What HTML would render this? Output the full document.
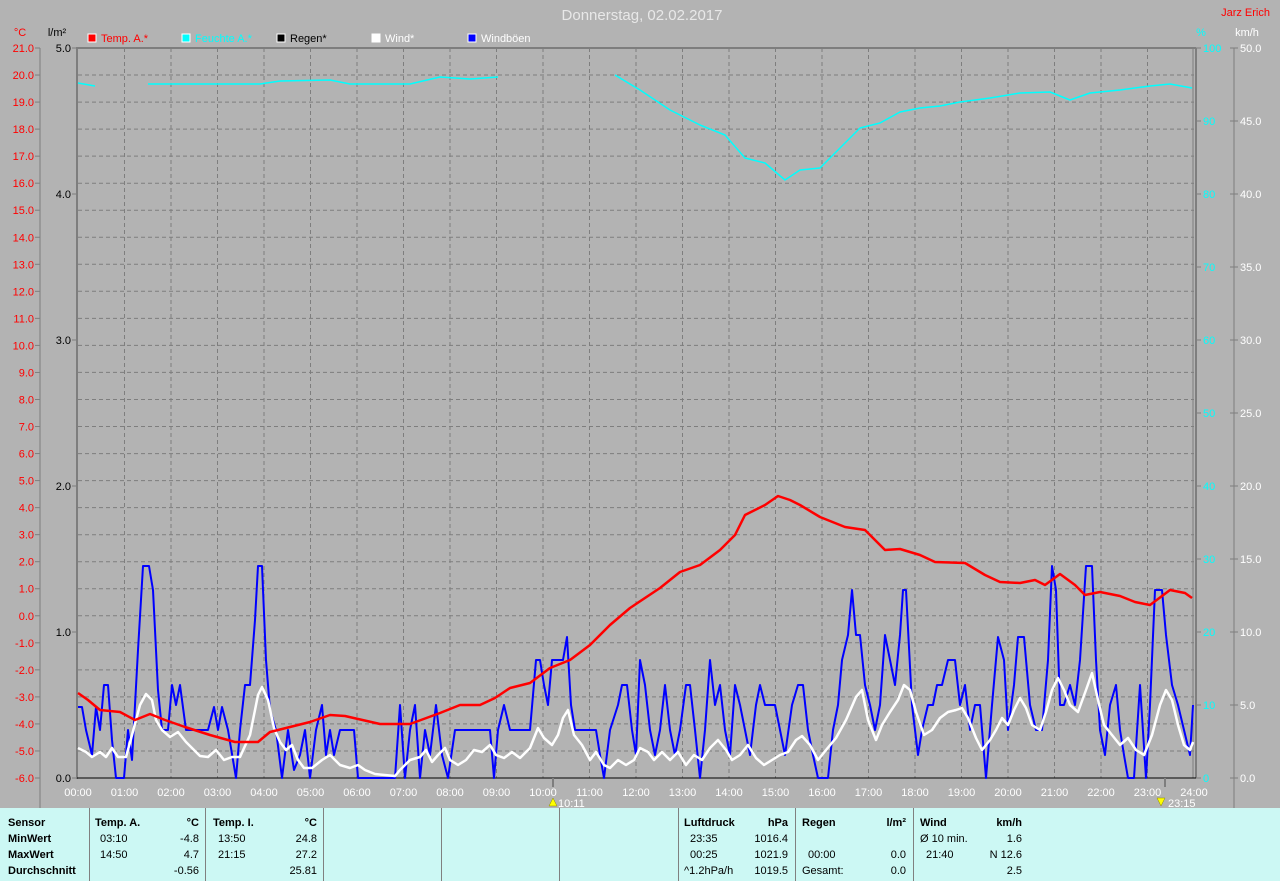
<!DOCTYPE html>
<html><head><meta charset="utf-8"><style>
html,body{margin:0;padding:0;background:#b3b3b3;width:1280px;height:881px;overflow:hidden;font-family:"Liberation Sans",Arial,sans-serif}
svg{position:absolute;left:0;top:0}
#panel{position:absolute;left:0;top:808px;width:1280px;height:73px;background:#ccf8f4;font-size:11px;color:#000}
.sep{position:absolute;top:0;width:1px;height:73px;background:#808080}
.t{position:absolute;white-space:nowrap;line-height:16px}
.b{font-weight:bold}
.r{text-align:right}
</style></head><body>
<svg id="s" width="1280" height="808" xmlns="http://www.w3.org/2000/svg" font-family="Liberation Sans, Arial, sans-serif" font-size="11"></svg>
<div id="panel">
<div class="sep" style="left:89px"></div><div class="sep" style="left:205px"></div><div class="sep" style="left:323px"></div><div class="sep" style="left:441px"></div><div class="sep" style="left:559px"></div><div class="sep" style="left:678px"></div><div class="sep" style="left:795px"></div><div class="sep" style="left:913px"></div>
<div class="t b" style="left:8px;top:7px">Sensor<br>MinWert<br>MaxWert<br>Durchschnitt</div>
<div class="t b" style="left:95px;top:7px">Temp. A.</div><div class="t b r" style="left:150px;width:49px;top:7px">°C</div>
<div class="t" style="left:100px;top:23px">03:10<br>14:50</div><div class="t r" style="left:150px;width:49px;top:23px">-4.8<br>4.7<br>-0.56</div>
<div class="t b" style="left:213px;top:7px">Temp. I.</div><div class="t b r" style="left:268px;width:49px;top:7px">°C</div>
<div class="t" style="left:218px;top:23px">13:50<br>21:15</div><div class="t r" style="left:268px;width:49px;top:23px">24.8<br>27.2<br>25.81</div>
<div class="t b" style="left:684px;top:7px">Luftdruck</div><div class="t b r" style="left:740px;width:48px;top:7px">hPa</div>
<div class="t" style="left:690px;top:23px">23:35<br>00:25</div><div class="t" style="left:684px;top:55px">^1.2hPa/h</div><div class="t r" style="left:730px;width:58px;top:23px">1016.4<br>1021.9<br>1019.5</div>
<div class="t b" style="left:802px;top:7px">Regen</div><div class="t b r" style="left:860px;width:46px;top:7px">l/m²</div>
<div class="t" style="left:808px;top:39px">00:00</div><div class="t" style="left:802px;top:55px">Gesamt:</div><div class="t r" style="left:860px;width:46px;top:39px">0.0<br>0.0</div>
<div class="t b" style="left:920px;top:7px">Wind</div><div class="t b r" style="left:970px;width:52px;top:7px">km/h</div>
<div class="t" style="left:920px;top:23px">Ø 10 min.</div><div class="t" style="left:926px;top:39px">21:40</div><div class="t r" style="left:960px;width:62px;top:23px">1.6<br>N 12.6<br>2.5</div>
</div>
<script>
var s=document.getElementById('s'),h='';
var L=78,R=1194,T=48,B=778,hw=(R-L)/24;
function tx(x,y,t,c,a,fs){h+='<text x="'+x+'" y="'+y+'" fill="'+c+'" text-anchor="'+(a||'start')+'"'+(fs?' font-size="'+fs+'"':'')+'>'+t+'</text>';}
// grid
for(var i=1;i<27;i++){var y=B-i*(B-T)/27;h+='<line x1="'+L+'" x2="'+R+'" y1="'+y.toFixed(1)+'" y2="'+y.toFixed(1)+'" stroke="#7e7e7e" stroke-dasharray="4,3"/>';}
for(var i=1;i<24;i++){var x=L+i*hw;h+='<line x1="'+x.toFixed(1)+'" x2="'+x.toFixed(1)+'" y1="'+T+'" y2="'+B+'" stroke="#7e7e7e" stroke-dasharray="4,3"/>';}
// border
h+='<line x1="77" x2="1196" y1="48" y2="48" stroke="#7e7e7e" stroke-width="2"/><line x1="77" x2="77" y1="47" y2="779" stroke="#7e7e7e" stroke-width="2"/>';
h+='<line x1="1193" x2="1193" y1="48" y2="778" stroke="#7e7e7e"/><line x1="1196" x2="1196" y1="48" y2="778" stroke="#7e7e7e" stroke-width="2"/>';
h+='<line x1="77" x2="1196" y1="778" y2="778" stroke="#000"/>';
// left temp axis
h+='<line x1="40" x2="40" y1="48" y2="808" stroke="#7e7e7e"/>';
for(var i=0;i<=27;i++){var y=B-i*(B-T)/27;h+='<line x1="35" x2="40" y1="'+y+'" y2="'+y+'" stroke="#7e7e7e"/>';tx(34,y+4,(i-6).toFixed(1),'#f00','end');}
tx(20,36,'°C','#f00','middle');tx(57,36,'l/m²','#000','middle');
for(var i=0;i<=5;i++){var y=B-i*146;h+='<line x1="72" x2="77" y1="'+y+'" y2="'+y+'" stroke="#7e7e7e"/>';tx(71,y+4,i.toFixed(1),'#000','end');}
// right axes
h+='<line x1="1234" x2="1234" y1="48" y2="808" stroke="#7e7e7e"/>';
for(var i=0;i<=10;i++){var y=B-i*73;h+='<line x1="1196" x2="1201" y1="'+y+'" y2="'+y+'" stroke="#7e7e7e"/>';tx(1203,y+4,i*10,'#0ff');h+='<line x1="1230" x2="1238" y1="'+y+'" y2="'+y+'" stroke="#7e7e7e"/>';tx(1240,y+4,(i*5).toFixed(1),'#fff');}
tx(1201,36,'%','#0ff','middle');tx(1247,36,'km/h','#fff','middle');
// x labels
for(var i=0;i<=24;i++){var x=L+i*hw;tx(x.toFixed(1),796,(i<10?'0':'')+i+':00','#fff','middle');}
h+='<line x1="553" x2="553" y1="778" y2="787" stroke="#7e7e7e" stroke-width="2"/><line x1="1165" x2="1165" y1="778" y2="787" stroke="#7e7e7e" stroke-width="2"/>';
h+='<polygon points="549,806 553,798 557,806" fill="#ff0" stroke="#880" stroke-width=".5"/>';tx(558,807,'10:11','#fff');
h+='<polygon points="1157,798 1165,798 1161,806" fill="#ff0" stroke="#880" stroke-width=".5"/>';tx(1168,807,'23:15','#fff');
// title / legend
tx(642,20,'Donnerstag, 02.02.2017','#e8e8e8','middle',15);tx(1270,16,'Jarz Erich','#f00','end');
var lg=[[88,'#f00','Temp. A.*','#f00'],[182,'#0ff','Feuchte A.*','#0ff'],[277,'#000','Regen*','#000'],[372,'#fff','Wind*','#fff'],[468,'#00f','Windböen','#fff']];
lg.forEach(function(a){h+='<rect x="'+a[0]+'" y="34" width="8" height="8" fill="'+a[1]+'" stroke="#fff"/>';tx(a[0]+13,42,a[2],a[3]);});
function pl(p,c,w){h+='<polyline points="'+p+'" fill="none" stroke="'+c+'" stroke-width="'+w+'" stroke-linejoin="round"/>';}
pl('78,83 95,86','#0ff',1.5);
pl('148,84 260,84 280,81 330,80 350,84 410,84 440,77 470,79 498,77','#0ff',1.5);
pl('615,75 640,90 670,110 700,125 725,135 745,158 765,163 785,180 800,170 820,168 840,148 860,128 880,123 900,112 920,108 940,106 960,102 990,98 1020,93 1050,92 1070,100 1090,93 1120,90 1150,86 1170,84 1192,88','#0ff',1.5);
pl('78,707 82,707 86,730 92,755 96,707 100,730 104,685 108,685 112,740 116,778 124,778 128,730 132,760 138,650 143,566 149,566 153,590 158,690 162,730 168,730 172,685 176,705 180,685 186,730 208,730 214,707 218,730 222,707 228,730 236,778 240,730 245,685 250,685 255,620 258,566 262,566 266,660 270,710 276,730 282,778 288,730 294,770 300,755 305,730 310,778 316,730 322,705 326,755 330,730 334,755 340,730 354,730 358,778 395,778 400,705 405,778 410,730 415,705 420,778 425,730 430,755 436,705 442,755 448,778 455,730 490,730 494,778 498,730 504,705 510,730 530,730 536,660 540,660 544,685 548,705 552,660 563,660 567,637 571,705 575,730 596,730 600,755 604,778 610,730 618,705 622,685 627,685 632,730 636,755 640,660 645,685 650,730 655,755 660,730 665,685 670,730 675,755 680,730 686,685 690,685 695,730 700,778 705,730 710,660 715,705 720,685 725,730 730,755 735,685 740,705 745,730 750,755 756,705 760,685 765,705 775,705 780,730 785,755 792,705 798,685 803,685 808,730 813,755 818,778 828,778 833,730 838,705 842,660 848,635 852,590 856,635 860,635 865,685 870,705 875,730 880,705 885,635 890,660 895,685 900,635 903,590 906,590 912,705 918,755 922,730 928,705 933,705 937,685 942,685 948,660 955,660 960,705 965,685 970,730 975,705 980,705 986,778 992,705 998,637 1004,660 1008,730 1014,685 1018,637 1024,637 1030,705 1036,730 1042,730 1048,660 1052,566 1056,590 1060,705 1064,705 1070,685 1075,705 1080,660 1086,566 1092,566 1096,660 1100,730 1105,755 1110,705 1116,685 1120,730 1124,755 1128,778 1134,778 1140,685 1146,778 1150,705 1155,590 1162,590 1166,635 1172,685 1178,705 1184,730 1190,755 1193,705','#00f',2);
pl('78,748 86,752 92,757 100,752 106,757 112,748 118,757 126,757 132,735 140,705 146,694 152,700 156,720 162,730 170,737 178,732 186,742 194,750 200,756 208,757 216,750 224,760 232,757 240,757 250,735 258,695 262,687 268,700 274,728 280,742 286,750 292,745 298,760 304,768 312,768 322,760 330,755 340,765 350,768 358,765 365,770 375,774 395,776 400,770 410,760 420,757 426,750 432,762 438,755 445,748 450,760 458,765 466,760 474,750 482,752 490,745 496,755 504,758 512,752 520,758 530,748 538,728 544,738 552,745 558,735 563,718 568,710 574,735 582,745 590,760 596,752 604,765 610,768 618,760 626,765 634,760 640,748 648,752 654,760 662,752 670,760 678,752 686,765 694,755 702,760 710,748 718,740 726,750 732,760 740,755 748,745 756,758 764,765 772,760 780,755 788,752 796,740 802,736 810,745 818,760 826,750 836,738 846,720 856,697 862,690 868,720 876,740 882,725 890,712 898,700 904,685 910,690 916,712 924,735 932,730 940,718 948,712 956,710 962,708 968,718 976,738 982,750 990,740 996,730 1002,718 1008,725 1014,710 1020,698 1026,708 1032,725 1040,730 1046,712 1052,690 1058,678 1064,690 1070,705 1078,712 1086,690 1092,673 1098,700 1104,725 1112,735 1120,745 1128,738 1136,750 1144,755 1152,735 1160,705 1166,690 1172,700 1178,725 1184,745 1190,750 1193,742','#fff',2.5);
pl('78,693 88,700 100,710 120,712 135,720 150,714 165,720 185,727 210,735 235,742 258,742 270,732 290,727 310,722 330,715 345,716 380,724 410,724 440,713 460,705 480,705 495,698 510,688 530,683 550,668 570,660 590,645 610,625 630,608 660,588 680,572 700,565 720,550 735,535 745,515 765,505 778,496 790,500 800,505 820,517 845,527 865,530 880,545 885,550 900,549 920,555 935,562 965,563 985,575 1000,582 1020,583 1035,580 1045,585 1060,574 1075,585 1085,595 1100,592 1120,596 1135,602 1150,605 1170,590 1185,593 1192,598','#f00',2.5);
s.innerHTML=h;
</script>
</body></html>
